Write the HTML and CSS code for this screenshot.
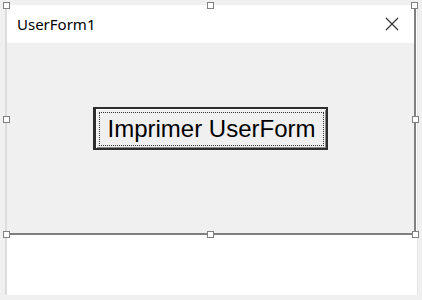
FILE: index.html
```html
<!DOCTYPE html>
<html lang="fr">
<head>
    <meta charset="UTF-8">
    <meta name="viewport" content="width=device-width, initial-scale=1.0">
    <title>UserForm1</title>
    <link rel="stylesheet" href="styles.css">
</head>
<body>
    <div class="designer">
        <div class="userform">
            <div class="titlebar">
                <span class="title">UserForm1</span>
                <svg class="close" width="14" height="14" viewBox="0 0 14 14">
                    <path d="M1 1 L13 13 M13 1 L1 13" stroke="#333" stroke-width="1.2" fill="none"/>
                </svg>
            </div>
            <div class="client">
                <button class="cmd" type="button"><span class="focus">Imprimer UserForm</span></button>
            </div>

            <span class="grip tl"></span>
            <span class="grip tc"></span>
            <span class="grip tr"></span>
            <span class="grip ml"></span>
            <span class="grip mr"></span>
            <span class="grip bl"></span>
            <span class="grip bc"></span>
            <span class="grip br"></span>
        </div>
    </div>
</body>
</html>
```

FILE: styles.css
```css
body { margin: 0; background: #f0f0f0; font-family: "Noto Sans", "Open Sans", sans-serif; }

.designer { margin: 5px 0 0 5px; width: 413px; height: 290px; background: #fff; border-left: 2px solid #dcdcdc; border-right: 1px solid #e4e4e4; box-sizing: border-box; }

.userform { position: relative; width: 407px; border-right: 2px solid #808080; border-bottom: 2px solid #808080; }

.titlebar { height: 38px; display: flex; align-items: center; justify-content: space-between; padding: 0 15px 0 10px; background: #fff; }
.title { font-size: 15px; color: #000; }
.close { display: block; }

.client { height: 190px; background: #f0f0f0; display: flex; justify-content: center; padding-top: 64px; box-sizing: border-box; }

.cmd { width: 235px; height: 43px; padding: 3px 2px 2px 3px; background: #f0f0f0; border: 2px solid #2e2e2e; border-left-width: 3px; box-shadow: inset 1px 1px 0 #fff, inset -1px -1px 0 #8a8a8a; font-family: "Liberation Sans", Arial, sans-serif; font-size: 24px; color: #000; box-sizing: border-box; }
.focus { display: flex; align-items: center; justify-content: center; height: 100%; border: 1px dotted #333; box-sizing: border-box; }

.grip { position: absolute; width: 5px; height: 5px; background: #fff; border: 1px solid #808080; }
.tl { left: -4px; top: -3px; }
.tc { left: 200px; top: -3px; }
.tr { right: -4px; top: -3px; }
.ml { left: -4px; top: 111px; }
.mr { right: -5px; top: 111px; }
.bl { left: -4px; bottom: -5px; }
.bc { left: 200px; bottom: -5px; }
.br { right: -5px; bottom: -5px; }
```
